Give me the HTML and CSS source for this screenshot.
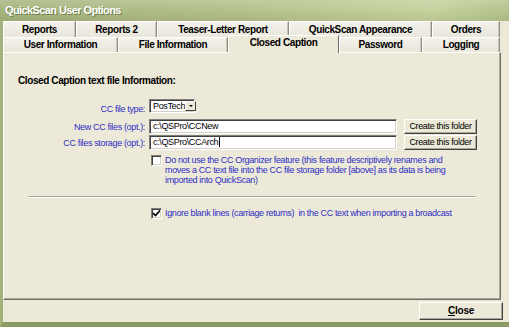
FILE: index.html
```html
<!DOCTYPE html>
<html lang="en">

<head>
  <meta charset="utf-8">
  <title>QuickScan User Options</title>
  <link rel="stylesheet" href="styles.css">
</head>

<body>
  <div class="window">
    <div class="titlebar">QuickScan User Options</div>

    <div class="tabs">
      <div class="tab-row row-back">
        <div class="tab tab-reports">Reports</div>
        <div class="tab tab-reports2">Reports 2</div>
        <div class="tab tab-teaser">Teaser-Letter Report</div>
        <div class="tab tab-appearance">QuickScan Appearance</div>
        <div class="tab tab-orders">Orders</div>
      </div>
      <div class="tab-row row-front">
        <div class="tab tab-userinfo">User Information</div>
        <div class="tab tab-fileinfo">File Information</div>
        <div class="tab tab-caption active">Closed Caption</div>
        <div class="tab tab-password">Password</div>
        <div class="tab tab-logging">Logging</div>
      </div>
    </div>

    <div class="panel">
      <div class="heading">Closed Caption text file Information:</div>

      <div class="fields">
        <div class="label">CC file type:</div>
        <div class="select">
          <span class="select-value">PosTech</span>
          <span class="select-arrow"></span>
        </div>
        <div></div>

        <div class="label">New CC files (opt.):</div>
        <div class="textbox">c:\QSPro\CCNew</div>
        <div class="btn">Create this folder</div>

        <div class="label">CC files storage (opt.):</div>
        <div class="textbox">c:\QSPro\CCArch<span class="caret"></span></div>
        <div class="btn">Create this folder</div>

        <div class="check-row">
          <span class="checkbox"></span>
          <span class="check-text">Do not use the CC Organizer feature (this feature descriptively renames and<br>moves a CC text file into the CC file storage folder [above] as its data is being<br>imported into QuickScan)</span>
        </div>
      </div>

      <div class="divider"></div>

      <div class="fields">
        <div class="check-row">
          <span class="checkbox checked">
            <svg width="7" height="7" viewBox="0 0 7 7"><path d="M0 3 L2.5 5.5 L7 0.5" fill="none" stroke="#000" stroke-width="1.6"/></svg>
          </span>
          <span class="check-text">Ignore blank lines (carriage returns)&nbsp; in the CC text when importing a broadcast</span>
        </div>
      </div>
    </div>

    <div class="footer">
      <div class="btn close-btn"><u>C</u>lose</div>
    </div>
  </div>
</body>

</html>
```

FILE: styles.css
```css
body {
  margin: 0;
  background-color: #ece9d8;
  font-family: "Liberation Sans", Arial, sans-serif;
}

.window {
  width: 509px;
  height: 327px;
  box-sizing: border-box;
  border-left: 3px solid #a3b27b;
  border-bottom: 5px solid #8b9b63;
  background-color: #ece9d8;
  display: flex;
  flex-direction: column;
}

/* title bar */

.titlebar {
  height: 21px;
  padding-left: 5px;
  margin-left: -3px;
  line-height: 21px;
  font-size: 11px;
  font-weight: 700;
  letter-spacing: -0.6px;
  color: #fff;
  text-shadow: 1px 1px 0 #6f7e4c;
  background: linear-gradient(to bottom, rgba(255, 255, 255, 0.18), rgba(255, 255, 255, 0) 55%, rgba(0, 0, 0, 0.06)),
    linear-gradient(to right, #a5b37b 0%, #b2bf87 45%, #c4d19c 85%, #b3c289 100%);
}

/* tabs */

.tabs {
  display: flex;
  flex-direction: column;
  padding-right: 9px;
}

.tab-row {
  display: flex;
}

.row-back {
  height: 16px;
}

.row-front {
  height: 15px;
}

.tab {
  box-sizing: border-box;
  font-size: 10px;
  font-weight: 700;
  letter-spacing: -0.4px;
  color: #000;
  text-align: center;
  white-space: nowrap;
  background: linear-gradient(to bottom, #f3f2ea, #e9e6da);
  border-top: 1px solid #fff;
  border-left: 1px solid #fff;
  border-right: 1px solid #8f8d82;
  box-shadow: inset -1px 0 0 #c9c6b8;
  line-height: 15px;
}

.row-front .tab {
  line-height: 14px;
}

.tab.active {
  position: relative;
  z-index: 1;
  height: 18px;
  margin-top: -2px;
  margin-bottom: -1px;
  line-height: 14px;
  background: #ece9d8;
  border-right-color: #716f64;
  box-shadow: none;
}

.tab-reports { width: 73px; }
.tab-reports2 { width: 81px; }
.tab-teaser { width: 132px; }
.tab-appearance { width: 143px; }
.tab-orders { width: 68px; }

.tab-userinfo { width: 115px; }
.tab-fileinfo { width: 110px; }
.tab-caption { width: 111px; }
.tab-password { width: 83px; }
.tab-logging { width: 78px; }

/* panel */

.panel {
  box-sizing: border-box;
  width: 498px;
  height: 248px;
  border-top: 1px solid #fff;
  border-left: 1px solid #fff;
  border-right: 1px solid #716f64;
  border-bottom: 1px solid #716f64;
  box-shadow: inset -1px -1px 0 #aca899;
  padding-top: 21px;
}

.heading {
  margin-left: 14px;
  font-size: 10px;
  font-weight: 700;
  letter-spacing: -0.4px;
  line-height: 13px;
  color: #000;
}

.fields {
  display: grid;
  grid-template-columns: 141px 248px 76px;
  column-gap: 4px;
  row-gap: 1px;
  align-items: center;
}

.heading + .fields {
  margin-top: 12px;
}

.label,
.textbox,
.select,
.btn,
.check-text {
  font-size: 9px;
  letter-spacing: -0.35px;
  white-space: nowrap;
}

.label {
  text-align: right;
  color: #2e2ec6;
}

.textbox {
  box-sizing: border-box;
  height: 15px;
  padding-left: 3px;
  line-height: 13px;
  color: #000;
  background: #fff;
  border: 1px solid;
  border-color: #7f7f7f #fff #fff #7f7f7f;
  box-shadow: inset 1px 1px 0 #404040, inset -1px -1px 0 #d4d0c8;
}

.caret {
  display: inline-block;
  width: 1px;
  height: 10px;
  margin-left: 1px;
  vertical-align: -2px;
  background: #000;
}

.select {
  box-sizing: border-box;
  width: 46px;
  height: 14px;
  margin-bottom: 5px;
  display: flex;
  align-items: center;
  justify-content: space-between;
  padding: 0 1px 0 3px;
  background: #fff;
  border: 1px solid;
  border-color: #7f7f7f #fff #fff #7f7f7f;
  box-shadow: inset 1px 1px 0 #404040, inset -1px -1px 0 #d4d0c8;
  color: #000;
}

.select-arrow {
  box-sizing: border-box;
  flex: none;
  width: 11px;
  height: 10px;
  background: #ece9d8;
  border: 1px solid;
  border-color: #fff #404040 #404040 #fff;
  display: flex;
  align-items: center;
  justify-content: center;
}

.select-arrow::after {
  content: "";
  border-left: 2px solid transparent;
  border-right: 2px solid transparent;
  border-top: 2px solid #000;
}

.btn {
  box-sizing: border-box;
  justify-self: end;
  width: 73px;
  height: 15px;
  line-height: 13px;
  text-align: center;
  color: #000;
  background: #ece9d8;
  border: 1px solid;
  border-color: #fff #404040 #404040 #fff;
  box-shadow: inset -1px -1px 0 #aca899;
}

.check-row {
  grid-column: 2 / span 2;
  display: flex;
  align-items: flex-start;
  margin-top: 3px;
}

.checkbox {
  box-sizing: border-box;
  flex: none;
  width: 11px;
  height: 11px;
  margin: 1px 3px 0 2px;
  background: #fff;
  border: 1px solid;
  border-color: #7f7f7f #fff #fff #7f7f7f;
  box-shadow: inset 1px 1px 0 #404040, inset -1px -1px 0 #d4d0c8;
  display: flex;
  align-items: center;
  justify-content: center;
}

.check-text {
  line-height: 10px;
  color: #2e2ec6;
  padding-top: 1px;
}

.divider {
  width: 448px;
  height: 1px;
  margin: 11px 0 9px 24px;
  background: #aca899;
  border-bottom: 1px solid #fff;
}

.divider + .fields .check-row {
  margin-top: 0;
}

/* footer */

.footer {
  display: flex;
  justify-content: flex-end;
  padding: 2px 6px 0 0;
}

.btn.close-btn {
  width: 84px;
  height: 18px;
  font-size: 10px;
  font-weight: 700;
  letter-spacing: -0.2px;
  line-height: 16px;
}
```
